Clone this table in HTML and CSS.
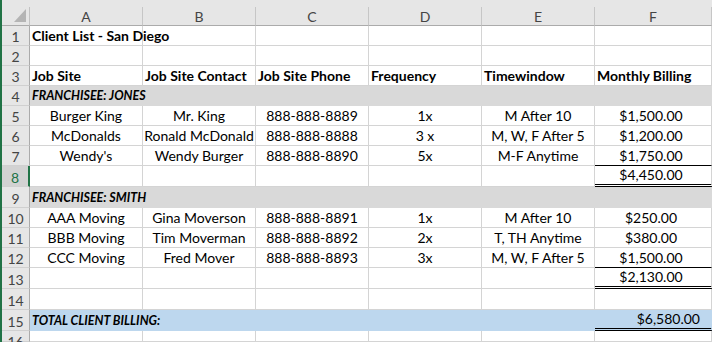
FILE: index.html
```html
<!DOCTYPE html>
<html>
<head>
<meta charset="utf-8">
<link rel="stylesheet" href="styles.css">
</head>
<body>
<div class="sheet">
  <div class="edge"></div>
  <div class="topstrip"></div>

  <div class="corner"><svg width="12" height="14" viewBox="0 0 12 14"><polygon points="12,0 12,13 0,13" fill="#b4b4b4"/></svg></div>
  <div class="ch">A</div><div class="ch">B</div><div class="ch">C</div><div class="ch">D</div><div class="ch">E</div><div class="ch">F</div>

  <div class="rh">1</div>
  <div class="cell l b">Client List - San Diego</div><div class="cell"></div><div class="cell"></div><div class="cell"></div><div class="cell"></div><div class="cell last"></div>

  <div class="rh">2</div>
  <div class="cell"></div><div class="cell"></div><div class="cell"></div><div class="cell"></div><div class="cell"></div><div class="cell last"></div>

  <div class="rh">3</div>
  <div class="cell l b">Job Site</div><div class="cell l b">Job Site Contact</div><div class="cell l b">Job Site Phone</div><div class="cell l b">Frequency</div><div class="cell l b">Timewindow</div><div class="cell l b last">Monthly Billing</div>

  <div class="rh">4</div>
  <div class="cell gray l bi">FRANCHISEE: JONES</div><div class="cell gray"></div><div class="cell gray"></div><div class="cell gray"></div><div class="cell gray"></div><div class="cell gray last"></div>

  <div class="rh">5</div>
  <div class="cell c">Burger King</div><div class="cell c">Mr. King</div><div class="cell c">888-888-8889</div><div class="cell c">1x</div><div class="cell c">M After 10</div><div class="cell c money last">$1,500.00</div>

  <div class="rh">6</div>
  <div class="cell c">McDonalds</div><div class="cell c">Ronald McDonald</div><div class="cell c">888-888-8888</div><div class="cell c">3 x</div><div class="cell c">M, W, F After 5</div><div class="cell c money last">$1,200.00</div>

  <div class="rh">7</div>
  <div class="cell c">Wendy's</div><div class="cell c">Wendy Burger</div><div class="cell c">888-888-8890</div><div class="cell c">5x</div><div class="cell c">M-F Anytime</div><div class="cell c money last single">$1,750.00</div>

  <div class="rh sel">8</div>
  <div class="cell"></div><div class="cell"></div><div class="cell"></div><div class="cell"></div><div class="cell"></div><div class="cell c money last double">$4,450.00</div>

  <div class="rh">9</div>
  <div class="cell gray l bi">FRANCHISEE: SMITH</div><div class="cell gray"></div><div class="cell gray"></div><div class="cell gray"></div><div class="cell gray"></div><div class="cell gray last"></div>

  <div class="rh">10</div>
  <div class="cell c">AAA Moving</div><div class="cell c">Gina Moverson</div><div class="cell c">888-888-8891</div><div class="cell c">1x</div><div class="cell c">M After 10</div><div class="cell c money last">$250.00</div>

  <div class="rh">11</div>
  <div class="cell c">BBB Moving</div><div class="cell c">Tim Moverman</div><div class="cell c">888-888-8892</div><div class="cell c">2x</div><div class="cell c">T, TH Anytime</div><div class="cell c money last">$380.00</div>

  <div class="rh">12</div>
  <div class="cell c">CCC Moving</div><div class="cell c">Fred Mover</div><div class="cell c">888-888-8893</div><div class="cell c">3x</div><div class="cell c">M, W, F After 5</div><div class="cell c money last single">$1,500.00</div>

  <div class="rh">13</div>
  <div class="cell"></div><div class="cell"></div><div class="cell"></div><div class="cell"></div><div class="cell"></div><div class="cell c money last double">$2,130.00</div>

  <div class="rh">14</div>
  <div class="cell"></div><div class="cell"></div><div class="cell"></div><div class="cell"></div><div class="cell"></div><div class="cell last"></div>

  <div class="rh">15</div>
  <div class="cell blue l bi">TOTAL CLIENT BILLING:</div><div class="cell blue"></div><div class="cell blue"></div><div class="cell blue"></div><div class="cell blue"></div><div class="cell blue r last double">$6,580.00</div>

  <div class="rh partial">16</div>
  <div class="cell"></div><div class="cell"></div><div class="cell"></div><div class="cell"></div><div class="cell"></div><div class="cell last"></div>
</div>
</body>
</html>
```

FILE: styles.css
```css
html, body {
  margin: 0;
  padding: 0;
  background: #ffffff;
}

.sheet {
  display: grid;
  grid-template-columns: 2px 28px repeat(5, 113px) 117px;
  grid-template-rows: 7px 19px 20px 20px 20px 20px 20px 20px 20px 21px 21px 20px 20px 20px 21px 21px 21px 11px;
  width: 712px;
  height: 342px;
  overflow: hidden;
  font-family: Lato, "Liberation Sans", sans-serif;
  font-size: 14px;
  color: #000;
}

.edge {
  grid-column: 1;
  grid-row: 1 / -1;
  background: #217346;
}

.topstrip {
  grid-column: 2 / -1;
  background: #e6e6e6;
}

.corner {
  box-sizing: border-box;
  background: #e6e6e6;
  border-right: 1px solid #c2c2c2;
  border-bottom: 1px solid #ababab;
  display: flex;
  align-items: flex-end;
  justify-content: flex-end;
  padding: 0 3px 2px 0;
}

.corner svg {
  display: block;
}

.ch {
  box-sizing: border-box;
  background: #e6e6e6;
  border-right: 1px solid #c6c6c6;
  border-bottom: 1px solid #ababab;
  color: #444;
  display: flex;
  align-items: center;
  justify-content: center;
  font-size: 14px;
  padding-top: 1px;
}

.rh {
  box-sizing: border-box;
  background: #e6e6e6;
  border-right: 1px solid #ababab;
  border-bottom: 1px solid #d0d0d0;
  color: #444;
  display: flex;
  align-items: center;
  justify-content: center;
  font-size: 14px;
  padding-top: 2px;
}

.rh.partial {
  align-items: flex-start;
  padding-top: 3px;
  line-height: 16px;
}

.rh.sel {
  background: #d2d2d2;
  color: #217346;
  border-right: 2px solid #217346;
}

.cell {
  box-sizing: border-box;
  border-right: 1px solid #d4d4d4;
  border-bottom: 1px solid #d4d4d4;
  display: flex;
  align-items: flex-end;
  padding: 0 2px 1px 2px;
  white-space: nowrap;
  overflow: visible;
  line-height: 16px;
  min-width: 0;
}

.cell.l { justify-content: flex-start; }
.cell.c { justify-content: center; }
.cell.r { justify-content: flex-end; padding-right: 11px; }

.cell.b { font-weight: 700; }

.cell.bi {
  font-weight: 700;
  font-style: italic;
  font-size: 12.5px;
  position: relative;
  z-index: 1;
}

.cell.money { padding-right: 6px; }

.cell.gray {
  background: #d9d9d9;
  border-color: #d9d9d9;
}

.cell.blue {
  background: #bdd7ee;
  border-color: #bdd7ee;
}

.cell.single { border-bottom: 1px solid #000; }
.cell.double { border-bottom: 3px double #000; }
```
